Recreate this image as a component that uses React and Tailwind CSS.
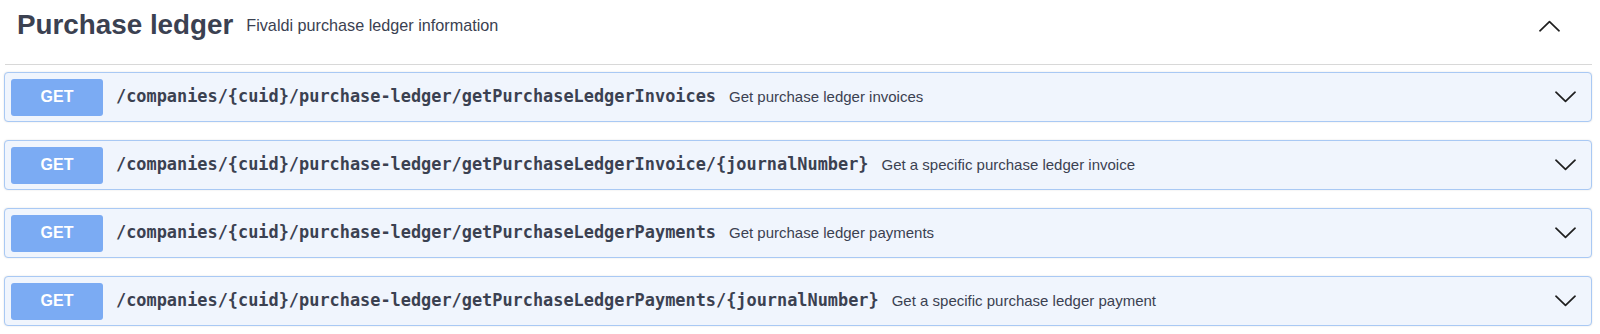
import React from 'react';

const ops = [
  { path: '/companies/{cuid}/purchase-ledger/getPurchaseLedgerInvoices', summary: 'Get purchase ledger invoices' },
  { path: '/companies/{cuid}/purchase-ledger/getPurchaseLedgerInvoice/{journalNumber}', summary: 'Get a specific purchase ledger invoice' },
  { path: '/companies/{cuid}/purchase-ledger/getPurchaseLedgerPayments', summary: 'Get purchase ledger payments' },
  { path: '/companies/{cuid}/purchase-ledger/getPurchaseLedgerPayments/{journalNumber}', summary: 'Get a specific purchase ledger payment' },
];

function Chevron({ up }) {
  return (
    <svg width="21" height="12" viewBox="0 0 22 12" className="shrink-0">
      <polyline
        points={up ? '1,11 11,1.5 21,11' : '1,1 11,10.5 21,1'}
        fill="none"
        stroke="#1f1f1f"
        strokeWidth="1.8"
        strokeLinecap="round"
        strokeLinejoin="round"
      />
    </svg>
  );
}

export default function App() {
  return (
    <div className="w-[1600px] h-[334px] bg-white pl-[4px] pr-[8px] font-['Liberation_Sans',Arial,sans-serif] text-[#3b4151] overflow-hidden">
      {/* tag header */}
      <div className="flex items-center h-[65px] pb-[14px] border-b border-[#d8d8d8] ml-[1px]">
        <h3 className="pl-[12px] text-[27.8px] font-bold leading-none">Purchase ledger</h3>
        <span className="ml-[13px] text-[16.2px] leading-none">Fivaldi purchase ledger information</span>
        <div className="flex-1" />
        <div className="mr-[32px] mt-[1px]">
          <Chevron up />
        </div>
      </div>

      {/* operations */}
      <div className="mt-[7px] flex flex-col gap-[18px]">
        {ops.map((op) => (
          <div
            key={op.path}
            className="flex items-center h-[50px] pl-[6px] pr-[15px] bg-[#f0f5fd] border border-[#a9c9f4] rounded-[4px] shadow-[0_0_2px_rgba(0,0,0,0.12)]"
          >
            <div className="w-[92px] h-[37px] flex items-center justify-center bg-[#7babf3] rounded-[3px] text-white text-[16px] font-bold">
              GET
            </div>
            <span className="ml-[13px] font-['DejaVu_Sans_Mono',monospace] text-[16.9px] font-bold text-[#3b4151] whitespace-nowrap">
              {op.path}
            </span>
            <span className="ml-[13px] text-[15px] text-[#3b4151] whitespace-nowrap">{op.summary}</span>
            <div className="flex-1" />
            <Chevron />
          </div>
        ))}
      </div>
    </div>
  );
}
